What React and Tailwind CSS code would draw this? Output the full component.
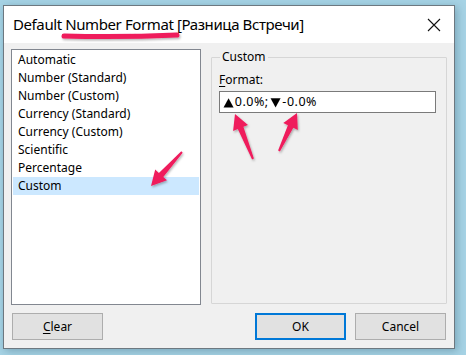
import React from "react";

function arrowPoints(x1, y1, x2, y2, headLen = 15, headW = 16, tailW = 2, neckW = 6) {
  const dx = x2 - x1, dy = y2 - y1;
  const L = Math.hypot(dx, dy);
  const ux = dx / L, uy = dy / L;
  const px = -uy, py = ux;
  const bx = x2 - ux * headLen, by = y2 - uy * headLen;
  const pts = [
    [x1 + px * tailW / 2, y1 + py * tailW / 2],
    [bx + px * neckW / 2, by + py * neckW / 2],
    [bx + px * headW / 2, by + py * headW / 2],
    [x2, y2],
    [bx - px * headW / 2, by - py * headW / 2],
    [bx - px * neckW / 2, by - py * neckW / 2],
    [x1 - px * tailW / 2, y1 - py * tailW / 2],
  ];
  return pts.map((p) => p[0].toFixed(1) + "," + p[1].toFixed(1)).join(" ");
}

const items = [
  "Automatic",
  "Number (Standard)",
  "Number (Custom)",
  "Currency (Standard)",
  "Currency (Custom)",
  "Scientific",
  "Percentage",
  "Custom",
];

export default function App() {
  const font = { fontFamily: '"Noto Sans", "Open Sans", sans-serif' };
  return (
    <div
      className="relative w-[466px] h-[355px] overflow-hidden bg-[#a6d3e5] pt-[5px] pl-[3px]"
      style={font}
    >
      <div className="w-[452px] h-[344px] border border-[#6d7880] bg-[#f0f0f0] flex flex-col shadow-[2px_2px_8px_rgba(40,80,100,0.35)]">
        {/* title bar */}
        <div className="h-[37px] bg-white flex items-center justify-between pl-[9px] pr-[13px] shrink-0">
          <span className="text-[15px] text-black tracking-[-0.4px] leading-none pb-[1px]">
            Default Number Format [Разница Встречи]
          </span>
          <svg width="14" height="14" viewBox="0 0 14 14" className="mt-[1px]">
            <path d="M1 1 L13 13 M13 1 L1 13" stroke="#111" strokeWidth="1.1" />
          </svg>
        </div>
        {/* body */}
        <div className="flex-1 flex flex-col text-[12px] text-black">
          <div className="flex pt-[6px] pl-[7px] pr-[6px]">
            <div className="w-[190px] h-[256px] border border-[#828790] bg-white pt-[1px] px-[1px]">
              {items.map((it) => (
                <div
                  key={it}
                  className={
                    "h-[18px] flex items-center pl-[5px] leading-none " +
                    (it === "Custom" ? "bg-[#cce8ff]" : "")
                  }
                >
                  {it}
                </div>
              ))}
            </div>
            <fieldset className="ml-[10px] w-[236px] h-[255px] border border-[#d6d6d6] rounded-[1px] px-[7px]">
              <legend className="ml-[1px] px-[2px] leading-[16px]">Custom</legend>
              <div className="mt-[7px] leading-[16px]">
                <span className="underline underline-offset-2">F</span>ormat:
              </div>
              <div className="mt-[3px] w-[217px] h-[22px] border border-[#7a7a7a] bg-white flex items-center pl-[4px] leading-none text-[12.5px] tracking-[0.5px]">
                <span style={{ fontFamily: '"DejaVu Sans", sans-serif' }} className="text-[12px] scale-x-110 inline-block mr-[1px]">▲</span>
                0.0%;
                <span style={{ fontFamily: '"DejaVu Sans", sans-serif' }} className="text-[12px] scale-x-110 inline-block mx-[2px]">▼</span>
                -0.0%
              </div>
            </fieldset>
          </div>
          <div className="flex justify-between items-center pl-[8px] pr-[8px] mt-[8px]">
            <button className="w-[91px] h-[27px] bg-[#e1e1e1] border border-[#adadad] text-[12px]">
              <span className="underline underline-offset-2">C</span>lear
            </button>
            <div className="flex gap-[9px]">
              <button className="w-[91px] h-[27px] bg-[#e1e1e1] border-2 border-[#0078d7] text-[12px]">
                OK
              </button>
              <button className="w-[91px] h-[27px] bg-[#e1e1e1] border border-[#adadad] text-[12px]">
                Cancel
              </button>
            </div>
          </div>
        </div>
      </div>
      {/* annotation overlay */}
      <svg
        className="absolute inset-0 pointer-events-none"
        width="466"
        height="355"
        viewBox="0 0 466 355"
      >
        <defs>
          <filter id="sh" x="-20%" y="-20%" width="140%" height="140%">
            <feDropShadow dx="1" dy="1.5" stdDeviation="1.2" floodColor="#000" floodOpacity="0.3" />
          </filter>
        </defs>
        <g filter="url(#sh)" fill="#ef1b5c">
          <path
            d="M64 36 Q120 37.5 177 35"
            stroke="#ef1b5c"
            strokeWidth="5"
            strokeLinecap="round"
            fill="none"
          />
          <polygon points={arrowPoints(182, 152, 151, 186)} />
          <polygon points={arrowPoints(253, 159, 235, 114)} />
          <polygon points={arrowPoints(279, 151, 297, 113)} />
        </g>
      </svg>
    </div>
  );
}
